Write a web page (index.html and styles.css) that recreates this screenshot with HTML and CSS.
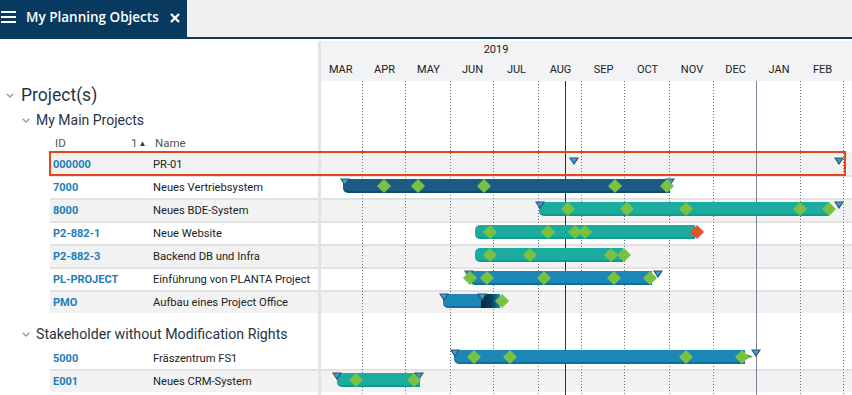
FILE: index.html
```html
<!DOCTYPE html>
<html lang="en">
<head>
    <meta charset="UTF-8">
    <meta name="viewport" content="width=device-width, initial-scale=1.0">
    <title>My Planning Objects</title>
    <link rel="stylesheet" href="styles.css">
</head>
<body>

    <div class="topbar">
        <div class="tab">
            <svg class="menu" width="15" height="12" viewBox="0 0 15 12">
                <rect x="0" y="0" width="15" height="2" fill="#fff"/>
                <rect x="0" y="5" width="15" height="2" fill="#fff"/>
                <rect x="0" y="10" width="15" height="2" fill="#fff"/>
            </svg>
            <span class="tab-title">My Planning Objects</span>
            <svg class="close" width="10" height="10" viewBox="0 0 10 10">
                <path d="M1 1 L9 9 M9 1 L1 9" stroke="#fff" stroke-width="2.4" fill="none"/>
            </svg>
        </div>
    </div>

    <div class="main">
        <!-- left: project tree -->
        <div class="tree">
            <div class="tree-spacer"></div>
            <div class="group level0">
                <svg class="chev" width="8" height="5" viewBox="0 0 8 5"><polyline points="0.7,0.7 4,4 7.3,0.7" fill="none" stroke="#9a9a9a" stroke-width="1.4"/></svg>
                Project(s)
            </div>
            <div class="group level1">
                <svg class="chev" width="8" height="5" viewBox="0 0 8 5"><polyline points="0.7,0.7 4,4 7.3,0.7" fill="none" stroke="#9a9a9a" stroke-width="1.4"/></svg>
                My Main Projects
            </div>
            <div class="colhead">
                <span class="h-id">ID</span>
                <span class="h-sort">1<i>&#9650;</i></span>
                <span class="h-name">Name</span>
            </div>
            <div class="rows">
                <div class="row alt"><span class="c-id">000000</span><span class="c-name">PR-01</span></div>
                <div class="row"><span class="c-id">7000</span><span class="c-name">Neues Vertriebsystem</span></div>
                <div class="row alt"><span class="c-id">8000</span><span class="c-name">Neues BDE-System</span></div>
                <div class="row"><span class="c-id">P2-882-1</span><span class="c-name">Neue Website</span></div>
                <div class="row alt"><span class="c-id">P2-882-3</span><span class="c-name">Backend DB und Infra</span></div>
                <div class="row"><span class="c-id">PL-PROJECT</span><span class="c-name">Einführung von PLANTA Project</span></div>
                <div class="row alt"><span class="c-id">PMO</span><span class="c-name">Aufbau eines Project Office</span></div>
            </div>
            <div class="group level1 stake">
                <svg class="chev" width="8" height="5" viewBox="0 0 8 5"><polyline points="0.7,0.7 4,4 7.3,0.7" fill="none" stroke="#9a9a9a" stroke-width="1.4"/></svg>
                Stakeholder without Modification Rights
            </div>
            <div class="rows">
                <div class="row"><span class="c-id">5000</span><span class="c-name">Fräszentrum FS1</span></div>
                <div class="row alt"><span class="c-id">E001</span><span class="c-name">Neues CRM-System</span></div>
            </div>
        </div>

        <div class="divider"></div>

        <!-- right: gantt chart -->
        <div class="gantt">
            <div class="timescale">
                <div class="years"><span class="year">2019</span></div>
                <div class="months">
                    <span>MAR</span><span>APR</span><span>MAY</span><span>JUN</span><span>JUL</span><span>AUG</span>
                    <span>SEP</span><span>OCT</span><span>NOV</span><span>DEC</span><span>JAN</span><span>FEB</span>
                </div>
            </div>
            <div class="gantt-gap"></div>
            <div class="rows">
                <div class="row alt">
                    <svg class="mk" style="left:253px" width="10" height="8" viewBox="0 0 10 8"><polygon points="1,1 9,1 5,7" fill="#1ba9ec" stroke="#3f4e5e" stroke-width="1.2"/></svg>
                    <svg class="mk" style="left:518px" width="10" height="8" viewBox="0 0 10 8"><polygon points="1,1 9,1 5,7" fill="#1ba9ec" stroke="#3f4e5e" stroke-width="1.2"/></svg>
                </div>
                <div class="row">
                    <div class="bar navy" style="left:22px; width:327px"></div>
                    <svg class="mk on-bar" style="left:24px" width="10" height="8" viewBox="0 0 10 8"><polygon points="1,1 9,1 5,7" fill="#1ba9ec" stroke="#3f4e5e" stroke-width="1.2"/></svg>
                    <svg class="mk on-bar" style="left:349px" width="10" height="8" viewBox="0 0 10 8"><polygon points="1,1 9,1 5,7" fill="#1ba9ec" stroke="#3f4e5e" stroke-width="1.2"/></svg>
                    <div class="ms" style="left:63px"></div>
                    <div class="ms" style="left:97px"></div>
                    <div class="ms" style="left:163px"></div>
                    <div class="ms" style="left:294px"></div>
                    <div class="ms" style="left:346px"></div>
                </div>
                <div class="row alt">
                    <div class="bar teal" style="left:218px; width:290px"></div>
                    <svg class="mk on-bar" style="left:219px" width="10" height="8" viewBox="0 0 10 8"><polygon points="1,1 9,1 5,7" fill="#1ba9ec" stroke="#3f4e5e" stroke-width="1.2"/></svg>
                    <svg class="mk on-bar" style="left:518px" width="10" height="8" viewBox="0 0 10 8"><polygon points="1,1 9,1 5,7" fill="#1ba9ec" stroke="#3f4e5e" stroke-width="1.2"/></svg>
                    <div class="ms" style="left:247px"></div>
                    <div class="ms" style="left:306px"></div>
                    <div class="ms" style="left:365px"></div>
                    <div class="ms" style="left:479px"></div>
                    <div class="ms" style="left:508px"></div>
                </div>
                <div class="row">
                    <div class="bar teal" style="left:154px; width:220px"></div>
                    <div class="ms" style="left:169px"></div>
                    <div class="ms" style="left:227px"></div>
                    <div class="ms" style="left:254px"></div>
                    <div class="ms" style="left:264px"></div>
                    <div class="ms red" style="left:376px"></div>
                </div>
                <div class="row alt">
                    <div class="bar teal" style="left:154px; width:148px"></div>
                    <div class="ms" style="left:169px"></div>
                    <div class="ms" style="left:209px"></div>
                    <div class="ms" style="left:290px"></div>
                    <div class="ms" style="left:303px"></div>
                </div>
                <div class="row">
                    <div class="bar blue" style="left:149px; width:182px"></div>
                    <svg class="mk on-bar" style="left:148px" width="10" height="8" viewBox="0 0 10 8"><polygon points="1,1 9,1 5,7" fill="#1ba9ec" stroke="#3f4e5e" stroke-width="1.2"/></svg>
                    <svg class="mk on-bar" style="left:337px" width="10" height="8" viewBox="0 0 10 8"><polygon points="1,1 9,1 5,7" fill="#1ba9ec" stroke="#3f4e5e" stroke-width="1.2"/></svg>
                    <div class="ms" style="left:149px"></div>
                    <div class="ms" style="left:166px"></div>
                    <div class="ms" style="left:223px"></div>
                    <div class="ms" style="left:293px"></div>
                    <div class="ms" style="left:329px"></div>
                </div>
                <div class="row alt">
                    <div class="bar blue" style="left:122px; width:57px"></div>
                    <div class="bar-shade" style="left:160px; width:19px"></div>
                    <svg class="mk on-bar" style="left:123px" width="10" height="8" viewBox="0 0 10 8"><polygon points="1,1 9,1 5,7" fill="#1ba9ec" stroke="#3f4e5e" stroke-width="1.2"/></svg>
                    <svg class="mk on-bar" style="left:161px" width="10" height="8" viewBox="0 0 10 8"><polygon points="1,1 9,1 5,7" fill="#1ba9ec" stroke="#3f4e5e" stroke-width="1.2"/></svg>
                    <div class="ms" style="left:181px"></div>
                </div>
            </div>
            <div class="gantt-gap mid"></div>
            <div class="rows">
                <div class="row">
                    <div class="bar blue" style="left:133px; width:291px"></div>
                    <svg class="mk on-bar" style="left:134px" width="10" height="8" viewBox="0 0 10 8"><polygon points="1,1 9,1 5,7" fill="#1ba9ec" stroke="#3f4e5e" stroke-width="1.2"/></svg>
                    <svg class="mk on-bar" style="left:435px" width="10" height="8" viewBox="0 0 10 8"><polygon points="1,1 9,1 5,7" fill="#1ba9ec" stroke="#3f4e5e" stroke-width="1.2"/></svg>
                    <svg class="arrow" style="left:425px" width="7" height="7" viewBox="0 0 7 7"><polygon points="0,1 7,3.5 0,6" fill="#3f9e3a"/></svg>
                    <div class="ms" style="left:153px"></div>
                    <div class="ms" style="left:189px"></div>
                    <div class="ms" style="left:365px"></div>
                    <div class="ms" style="left:421px"></div>
                </div>
                <div class="row alt">
                    <div class="bar teal" style="left:16px; width:83px"></div>
                    <svg class="mk on-bar" style="left:16px" width="10" height="8" viewBox="0 0 10 8"><polygon points="1,1 9,1 5,7" fill="#1ba9ec" stroke="#3f4e5e" stroke-width="1.2"/></svg>
                    <svg class="mk on-bar" style="left:98px" width="10" height="8" viewBox="0 0 10 8"><polygon points="1,1 9,1 5,7" fill="#1ba9ec" stroke="#3f4e5e" stroke-width="1.2"/></svg>
                    <div class="ms" style="left:35px"></div>
                    <div class="ms" style="left:93px"></div>
                </div>
            </div>

            <div class="gridlines">
                <span></span><span></span><span></span><span></span><span></span><span></span>
                <span></span><span></span><span></span><span class="year-end"></span><span></span><span></span><span></span>
            </div>
            <div class="today"></div>
        </div>

        <div class="selection"></div>
    </div>

</body>
</html>
```

FILE: styles.css
```css
* {
    box-sizing: border-box;
    padding: 0;
    margin: 0;
}
body {
    font-family: Roboto, "Liberation Sans", sans-serif;
    color: #222;
    background: #fff;
    overflow: hidden;
}

/* tab bar */
.topbar {
    height: 39px;
    background: #f0f0f0;
    border-bottom: 2px solid #073a5e;
}
.tab {
    width: 187px;
    height: 39px;
    background: #073a5e;
    display: flex;
    align-items: center;
    padding: 0 0 6px 1px;
    color: #fff;
}
.tab .menu {
    margin-right: 10px;
}
.tab-title {
    font-family: "Open Sans", "Noto Sans", sans-serif;
    font-weight: 600;
    font-size: 13.5px;
}
.tab .close {
    margin-left: 11px;
    margin-top: 3px;
}

/* main area */
.main {
    display: flex;
    position: relative;
    margin-top: 2px;
    height: 354px;
}
.tree {
    width: 318px;
}
.divider {
    width: 3px;
    background: #e7e1ea;
}
.gantt {
    flex: 1;
    position: relative;
    overflow: hidden;
}

/* tree */
.tree-spacer {
    height: 40px;
}
.group {
    color: #263545;
    display: flex;
    align-items: center;
}
.group .chev {
    margin-right: 6px;
}
.level0 {
    height: 28px;
    font-size: 17.5px;
    padding-left: 6px;
}
.level0 .chev {
    margin-right: 7px;
}
.level1 {
    height: 22px;
    font-size: 14px;
    padding-left: 22px;
}
.level1.stake {
    height: 33px;
    padding-top: 9px;
    font-size: 14.2px;
}
.colhead {
    height: 21px;
    line-height: 24px;
    font-size: 11.5px;
    color: #555;
    display: flex;
    padding-left: 55px;
}
.h-id {
    width: 76px;
}
.h-sort {
    width: 24px;
}
.h-sort i {
    font-style: normal;
    font-size: 8px;
    color: #1d3f5e;
    margin-left: 1px;
    vertical-align: 1px;
}

.rows .row {
    height: 23px;
    border-top: 2px solid #e2e2e2;
    position: relative;
}
.rows .row:first-child {
    border-top-color: transparent;
}
.row.alt {
    background: #f2f2f2;
}
.tree .rows {
    margin-left: 50px;
}
.tree .row {
    display: flex;
    line-height: 21px;
    font-size: 11.2px;
}
.c-id {
    width: 103px;
    padding-left: 3px;
    color: #1b7db7;
    font-weight: 700;
    font-size: 11px;
}
.c-name {
    color: #222;
}

/* gantt */
.gantt {
    --months: 44.5px 43px 45px 43px 45px 43px 43px 45px 44px 43px 44px 43px 44px;
}
.timescale {
    height: 40px;
    background: #f2f3f5;
    font-size: 11px;
    color: #222;
}
.years {
    display: flex;
    height: 18px;
    line-height: 18px;
    margin-left: -87px;
}
.year {
    flex: none;
    width: 524px;
    text-align: center;
}
.months {
    display: grid;
    grid-template-columns: var(--months);
    height: 22px;
    line-height: 22px;
    margin-left: -2.5px;
}
.months span {
    text-align: center;
}
.gantt-gap {
    height: 71px;
}
.gantt-gap.mid {
    height: 33px;
}

.gridlines {
    position: absolute;
    top: 40px;
    bottom: 0;
    left: -2.5px;
    display: grid;
    grid-template-columns: var(--months);
    z-index: 1;
}
.gridlines span {
    background: linear-gradient(#66748c 0 1px, transparent 1px 3px) right top / 1px 3px repeat-y;
}
.gridlines span.year-end {
    background: linear-gradient(#7a8597, #7a8597) right top / 1px 100% no-repeat;
}
.today {
    position: absolute;
    top: 40px;
    bottom: 0;
    left: 244px;
    width: 1px;
    background: #761515;
    z-index: 1;
}

.bar {
    position: absolute;
    top: 2px;
    height: 14px;
    border-radius: 5px 0 0 5px;
    border-bottom: 2px solid;
    z-index: 2;
}
.bar.navy {
    background: #1c5b83;
    border-bottom-color: #104a6f;
}
.bar.teal {
    background: #1bab9f;
    border-bottom-color: #129a8f;
}
.bar.blue {
    background: #1c86b7;
    border-bottom-color: #0f6e9c;
}
.bar-shade {
    position: absolute;
    top: 2px;
    height: 14px;
    background: linear-gradient(90deg, #05243a 0%, #0b3f61 55%, #1c86b7 100%);
    z-index: 2;
}
.mk {
    position: absolute;
    top: 3px;
    margin-left: -5px;
    z-index: 3;
}
.mk.on-bar {
    top: 1px;
}
.arrow {
    position: absolute;
    top: 5px;
    z-index: 3;
}
.ms {
    position: absolute;
    top: 4px;
    width: 10px;
    height: 10px;
    margin-left: -5px;
    background: #77c143;
    transform: rotate(45deg);
    z-index: 4;
}
.ms.red {
    background: #e8502a;
}

.selection {
    position: absolute;
    left: 49px;
    top: 110px;
    width: 797px;
    height: 25px;
    border: 2px solid #e5441d;
    z-index: 5;
}
```
